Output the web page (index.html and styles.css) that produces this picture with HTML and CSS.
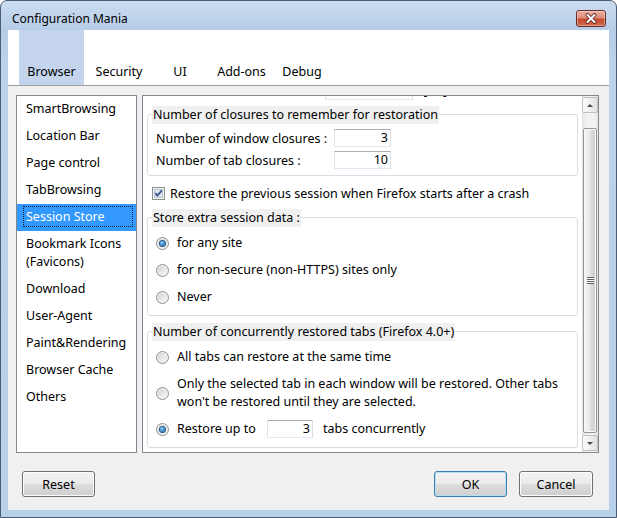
FILE: index.html
```html
<!DOCTYPE html>
<html>
<head>
<meta charset="utf-8">
<title>Configuration Mania</title>
<link rel="stylesheet" href="styles.css">
</head>
<body>
<div class="window">
  <div class="titlebar">
    <span class="title">Configuration Mania</span>
    <div class="close">
      <svg width="14" height="11" viewBox="0 0 14 11"><path d="M3.5 2 L10.5 9 M10.5 2 L3.5 9" stroke="#5b2019" stroke-width="3.8" stroke-linecap="round"/><path d="M3.5 2 L10.5 9 M10.5 2 L3.5 9" stroke="#ffffff" stroke-width="2.1" stroke-linecap="round"/></svg>
    </div>
  </div>
  <div class="client">
    <div class="tabs">
      <div class="tab active t1">Browser</div>
      <div class="tab t2">Security</div>
      <div class="tab t3">UI</div>
      <div class="tab t4">Add-ons</div>
      <div class="tab t5">Debug</div>
    </div>
    <div class="main">
      <ul class="nav">
        <li>SmartBrowsing</li>
        <li>Location Bar</li>
        <li>Page control</li>
        <li>TabBrowsing</li>
        <li class="sel">Session Store</li>
        <li>Bookmark Icons<br>(Favicons)</li>
        <li>Download</li>
        <li>User-Agent</li>
        <li>Paint&amp;Rendering</li>
        <li>Browser Cache</li>
        <li>Others</li>
      </ul>
      <div class="panel">
        <div class="view">
          <div class="content">
            <div class="top-row">
              <span class="top-spacer"></span>
              <span class="input w-top"></span>
              <span class="unit">[KB]</span>
            </div>
            <div class="group g1">
              <div class="caption">Number of closures to remember for restoration</div>
              <div class="field"><span class="flabel">Number of window closures :</span><span class="input num">3</span></div>
              <div class="field"><span class="flabel">Number of tab closures :</span><span class="input num">10</span></div>
            </div>
            <div class="check-row">
              <svg class="cb" width="13" height="13" viewBox="0 0 13 13"><rect x="0.5" y="0.5" width="12" height="12" fill="#f6f6f6" stroke="#8e8f8f"/><rect x="2.5" y="2.5" width="8" height="8" fill="#dde5ee" stroke="#bcc6d2"/><path d="M3.3 6.2 L5.4 8.7 L9.9 3.4" fill="none" stroke="#3b5494" stroke-width="1.8"/></svg>
              <span>Restore the previous session when Firefox starts after a crash</span>
            </div>
            <div class="group g2">
              <div class="caption">Store extra session data :</div>
              <div class="opt"><span class="radio on"></span><span class="olabel">for any site</span></div>
              <div class="opt"><span class="radio"></span><span class="olabel">for non-secure (non-HTTPS) sites only</span></div>
              <div class="opt"><span class="radio"></span><span class="olabel">Never</span></div>
            </div>
            <div class="group g3">
              <div class="caption">Number of concurrently restored tabs (Firefox 4.0+)</div>
              <div class="opt"><span class="radio"></span><span class="olabel">All tabs can restore at the same time</span></div>
              <div class="opt"><span class="radio"></span><span class="olabel">Only the selected tab in each window will be restored. Other tabs<br>won't be restored until they are selected.</span></div>
              <div class="opt"><span class="radio on"></span><span class="olabel rlabel">Restore up to</span><span class="input num w-small">3</span><span class="olabel after">tabs concurrently</span></div>
            </div>
          </div>
        </div>
        <div class="scrollbar">
          <div class="sb-btn"><span class="arrow up"></span></div>
          <div class="sb-track"><div class="sb-thumb"><span class="grip"></span></div></div>
          <div class="sb-btn"><span class="arrow down"></span></div>
        </div>
      </div>
    </div>
    <div class="footer">
      <button class="btn reset">Reset</button>
      <button class="btn default">OK</button>
      <button class="btn cancel">Cancel</button>
    </div>
  </div>
</div>
</body>
</html>
```
FILE: styles.css
```css
* { box-sizing: border-box; }
html, body { margin: 0; padding: 0; background: #ffffff; }
body {
  font-family: "Noto Sans", "Liberation Sans", sans-serif;
  font-size: 12.5px;
  color: #000;
}
.window {
  width: 617px;
  height: 518px;
  border: 1px solid #4a5d75;
  border-radius: 7px 7px 0 0;
  background: linear-gradient(#cadcf0 0px, #b6cde8 29px, #bcd2ea 60px, #b9d0ea 100%);
  padding: 0 7px 7px;
  display: flex;
  flex-direction: column;
}
.titlebar {
  height: 29px;
  display: flex;
  align-items: flex-start;
  flex: none;
}
.title {
  font-size: 12px;
  line-height: 18px;
  padding-top: 9px;
  margin-left: 4px;
  color: #000;
}
.close {
  margin-left: auto;
  margin-top: 9px;
  margin-right: 3px;
  width: 30px;
  height: 17px;
  border: 1px solid #6a2a22;
  border-radius: 3px;
  background: linear-gradient(#eab0a2 0%, #dc8c79 45%, #c5492f 55%, #cf6c52 100%);
  box-shadow: inset 0 0 0 1px rgba(255, 255, 255, 0.35);
  display: flex;
  align-items: center;
  justify-content: center;
}
.client {
  flex: 1;
  background: #f0f0f0;
  display: flex;
  flex-direction: column;
}
.tabs {
  height: 56px;
  flex: none;
  background: #ffffff;
  border-bottom: 1px solid #a0a0a0;
  display: flex;
  padding-left: 11px;
}
.tab {
  display: flex;
  align-items: flex-end;
  justify-content: center;
  padding-bottom: 4px;
  line-height: 18px;
}
.tab.active { background: #c3d4ec; }
.t1 { width: 65px; }
.t2 { width: 70px; }
.t3 { width: 52px; }
.t4 { width: 71px; }
.t5 { width: 50px; }

.main {
  display: flex;
  gap: 5px;
  padding: 9px 10px 0 8px;
  height: 367px;
  flex: none;
}
.nav {
  list-style: none;
  margin: 0;
  padding: 0;
  width: 121px;
  flex: none;
  background: #fff;
  border: 1px solid #828790;
}
.nav li {
  padding: 4px 0 5px 9px;
  line-height: 18px;
  position: relative;
}
.nav li.sel {
  background: #3399ff;
  color: #fff;
}
.nav li.sel::after {
  content: "";
  position: absolute;
  left: 6px;
  right: 3px;
  top: 2px;
  bottom: 4px;
  border: 1px dotted #0b1d3a;
}
.panel {
  flex: 1;
  border: 1px solid #828790;
  background: #fff;
  display: flex;
}
.view {
  flex: 1;
  overflow: hidden;
}
.content {
  margin-top: -22px;
}
.top-row {
  height: 26px;
  display: flex;
  align-items: flex-end;
}
.top-spacer { width: 182px; }
.input {
  height: 18px;
  background: #fff;
  border: 1px solid;
  border-color: #abadb3 #dbdfe6 #e3e9ef #e2e3ea;
  line-height: 16px;
  text-align: right;
  padding-right: 2px;
  display: inline-block;
  flex: none;
}
.w-top { width: 88px; }
.unit { margin-left: 10px; line-height: 18px; }
.group {
  margin: 14px 4px 0 4px;
  border: 1px solid #d5dfe5;
  border-radius: 3px;
  padding: 0 0 4px 8px;
  display: flex;
  flex-direction: column;
}
.caption {
  align-self: flex-start;
  margin: -9px 0 3px -4px;
  background: #f0f0f0;
  line-height: 18px;
  padding: 0 1px;
}
.field {
  height: 22px;
  display: flex;
  align-items: center;
}
.flabel { width: 178px; }
.num { width: 57px; }
.check-row {
  margin-top: 6px;
  height: 22px;
  display: flex;
  align-items: center;
  padding-left: 9px;
  gap: 5px;
}
.cb { flex: none; }
.g2 { margin-top: 13px; }
.g3 { margin-top: 15px; }
.opt {
  display: flex;
  align-items: center;
  padding: 4px 0 5px;
  min-height: 27px;
}
.olabel { line-height: 18px; margin-left: 8px; }
.rlabel { width: 90px; flex: none; }
.w-small { width: 46px; }
.after { margin-left: 10px; }
.radio {
  width: 13px;
  height: 13px;
  flex: none;
  border-radius: 50%;
  border: 1px solid #8e8f8f;
  background: linear-gradient(135deg, #cdcdcd 0%, #e6e6e6 50%, #fafafa 100%);
  box-shadow: inset 0 0 0 1px #f2f2f2;
  display: flex;
  align-items: center;
  justify-content: center;
}
.radio.on::after {
  content: "";
  width: 5px;
  height: 5px;
  border-radius: 50%;
  background: radial-gradient(circle at 40% 35%, #a8dcfa 0%, #3b8fd6 45%, #134f8c 100%);
  box-shadow: 0 0 0 1px #24558a;
}
.scrollbar {
  width: 16px;
  flex: none;
  display: flex;
  flex-direction: column;
  padding: 1px 0;
  background: linear-gradient(to right, #e3e3e3 0%, #f1f1f1 25%, #f3f3f3 75%, #e6e6e6 100%);
}
.sb-btn {
  height: 16px;
  flex: none;
  border: 1px solid #c0c0c0;
  border-radius: 2px;
  background: linear-gradient(to right, #fbfbfb 0%, #efefef 50%, #e2e2e2 100%);
  display: flex;
  align-items: center;
  justify-content: center;
}
.arrow {
  width: 0;
  height: 0;
  border-left: 3px solid transparent;
  border-right: 3px solid transparent;
}
.arrow.up { border-bottom: 3px solid #4a4a4a; }
.arrow.down { border-top: 3px solid #4a4a4a; }
.sb-track {
  flex: 1;
  padding-top: 15px;
}
.sb-thumb {
  margin: 0 1px;
  height: 305px;
  border: 1px solid #959595;
  border-radius: 2px;
  background: linear-gradient(to right, #f5f5f5 0%, #ececec 40%, #dadada 60%, #cecece 100%);
  box-shadow: inset 0 0 0 1px #fafafa;
  display: flex;
  align-items: center;
  justify-content: center;
}
.grip {
  width: 7px;
  height: 7px;
  background: repeating-linear-gradient(#5e5e5e 0 1px, #f8f8f8 1px 2px);
}
.footer {
  display: flex;
  gap: 12px;
  padding: 18px 16px 0 14px;
}
.btn {
  font: inherit;
  color: #000;
  width: 73px;
  height: 26px;
  padding: 0;
  border: 1px solid #707070;
  border-radius: 3px;
  background: linear-gradient(#f2f2f2 0%, #ebebeb 50%, #dddddd 50%, #cfcfcf 100%);
  box-shadow: inset 0 0 0 1px #fcfcfc;
}
.btn.reset { margin-right: auto; }
.btn.default {
  border-color: #3c7fb1;
  box-shadow: inset 0 0 0 1px #b6dff6;
}
.btn.cancel { width: 74px; }
```
